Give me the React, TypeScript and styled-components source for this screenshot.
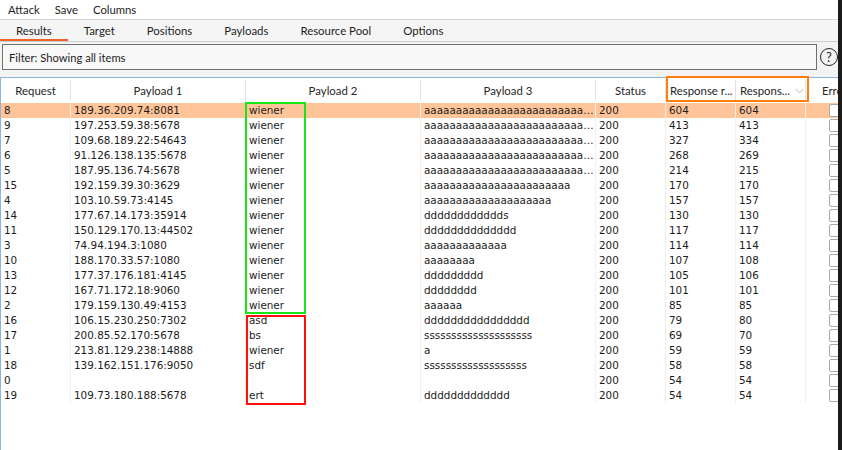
import React from 'react';
import styled, { createGlobalStyle } from 'styled-components';

const Global = createGlobalStyle`
  html, body { margin: 0; padding: 0; background: #fff; }
  body { font-family: Lato, "Noto Sans", sans-serif; -webkit-font-smoothing: antialiased; }
  * { box-sizing: border-box; }
`;

const COLS = '70px 175px 175px 175px 70px 70px 70px 1fr';

const Window = styled.div`
  width: 842px;
  height: 450px;
  display: flex;
  overflow: hidden;
  background: #fff;
`;

const Main = styled.div`
  flex: 1;
  min-width: 0;
  display: flex;
  flex-direction: column;
  position: relative;
`;

const EdgeStrip = styled.div`
  width: 4px;
  background: #1c1c1c;
`;

const MenuBar = styled.div`
  height: 19px;
  display: flex;
  align-items: center;
  padding: 0 0 1px 8px;
  gap: 15px;
  font-size: 11.3px;
  color: #1e1e1e;
  background: #fff;
`;

const TabBar = styled.div`
  height: 23px;
  display: flex;
  background: #f5f5f5;
  border-top: 1px solid #d9d9d9;
  border-bottom: 1px solid #cdcdcd;
`;

const Tab = styled.div<{ $active?: boolean }>`
  padding: 0 16px 1px;
  display: flex;
  align-items: center;
  font-size: 11.4px;
  color: #1e1e1e;
  box-shadow: ${(p) => (p.$active ? 'inset 0 -2px 0 #f0622a' : 'none')};
`;

const FilterArea = styled.div`
  display: flex;
  align-items: center;
  gap: 3px;
  padding: 2px 0 7px 2px;
  background: #f3f3f3;
`;

const FilterBox = styled.div`
  flex: 1;
  height: 26px;
  display: flex;
  align-items: center;
  padding-left: 6px;
  border: 1px solid #707070;
  background: #f8f8f8;
  font-size: 11.2px;
  color: #1e1e1e;
`;

const HelpIcon = styled.div`
  width: 18px;
  height: 18px;
  border: 1.5px solid #262626;
  border-radius: 50%;
  display: flex;
  align-items: center;
  justify-content: center;
  font-size: 13px;
  color: #262626;
`;

const Table = styled.div`
  flex: 1;
  border-top: 1px solid #8db4de;
  border-left: 1px solid #8db4de;
  background: #fff;
`;

const HeaderRow = styled.div`
  display: grid;
  grid-template-columns: ${COLS};
  height: 25px;
  font-size: 11.4px;
  color: #262626;
`;

const HeaderCell = styled.div<{ $align?: 'center' | 'left' }>`
  display: flex;
  align-items: center;
  justify-content: ${(p) => (p.$align === 'left' ? 'flex-start' : 'center')};
  padding-left: ${(p) => (p.$align === 'left' ? '4px' : '0')};
  margin: 2px 0 2px;
  border-right: 1px solid #e2e2e2;
  white-space: nowrap;
  overflow: hidden;
  gap: 5px;
`;

const ErrorHeader = styled(HeaderCell)`
  padding-left: 16px;
  border-right: none;
`;

const Row = styled.div<{ $selected?: boolean }>`
  display: grid;
  grid-template-columns: ${COLS};
  height: 15px;
  background: ${(p) => (p.$selected ? '#ffc599' : '#fff')};
  font-family: "DejaVu Sans", Verdana, sans-serif;
  font-size: 10.4px;
  color: #1c1c1c;
`;

const Cell = styled.div`
  padding-left: 3px;
  line-height: 15px;
  border-right: 1px solid #f0f0f0;
  white-space: nowrap;
  overflow: hidden;
  text-overflow: ellipsis;
`;

const CheckCell = styled.div`
  display: flex;
  align-items: center;
  padding-left: 23px;
  overflow: hidden;
`;

const CheckBox = styled.span`
  display: block;
  flex: none;
  width: 14px;
  height: 13px;
  border: 1px solid #a9a9a9;
  border-radius: 2px;
  background: #fff;
`;

const Annotation = styled.div<{ $color: string }>`
  position: absolute;
  border: 2px solid ${(p) => p.$color};
  pointer-events: none;
`;

const SortArrow = () => (
  <svg width="9" height="6" viewBox="0 0 9 6">
    <path d="M0.5 0.8 L4.5 4.8 L8.5 0.8" fill="none" stroke="#b8b8b8" strokeWidth="1" />
  </svg>
);

const LONG = 'a'.repeat(40);
const rep = (c: string, n: number) => c.repeat(n);

type R = [string, string, string, string, string, string, string];
const rows: R[] = [
  ['8', '189.36.209.74:8081', 'wiener', LONG, '200', '604', '604'],
  ['9', '197.253.59.38:5678', 'wiener', LONG, '200', '413', '413'],
  ['7', '109.68.189.22:54643', 'wiener', LONG, '200', '327', '334'],
  ['6', '91.126.138.135:5678', 'wiener', LONG, '200', '268', '269'],
  ['5', '187.95.136.74:5678', 'wiener', LONG, '200', '214', '215'],
  ['15', '192.159.39.30:3629', 'wiener', rep('a', 23), '200', '170', '170'],
  ['4', '103.10.59.73:4145', 'wiener', rep('a', 20), '200', '157', '157'],
  ['14', '177.67.14.173:35914', 'wiener', rep('d', 12) + 's', '200', '130', '130'],
  ['11', '150.129.170.13:44502', 'wiener', rep('d', 14), '200', '117', '117'],
  ['3', '74.94.194.3:1080', 'wiener', rep('a', 13), '200', '114', '114'],
  ['10', '188.170.33.57:1080', 'wiener', rep('a', 8), '200', '107', '108'],
  ['13', '177.37.176.181:4145', 'wiener', rep('d', 9), '200', '105', '106'],
  ['12', '167.71.172.18:9060', 'wiener', rep('d', 8), '200', '101', '101'],
  ['2', '179.159.130.49:4153', 'wiener', rep('a', 6), '200', '85', '85'],
  ['16', '106.15.230.250:7302', 'asd', rep('d', 16), '200', '79', '80'],
  ['17', '200.85.52.170:5678', 'bs', rep('s', 20), '200', '69', '70'],
  ['1', '213.81.129.238:14888', 'wiener', 'a', '200', '59', '59'],
  ['18', '139.162.151.176:9050', 'sdf', rep('s', 19), '200', '58', '58'],
  ['0', '', '', '', '200', '54', '54'],
  ['19', '109.73.180.188:5678', 'ert', rep('d', 13), '200', '54', '54'],
];

export default function App() {
  return (
    <Window>
      <Global />
      <Main>
        <MenuBar>
          <span>Attack</span>
          <span>Save</span>
          <span>Columns</span>
        </MenuBar>
        <TabBar>
          <Tab $active>Results</Tab>
          <Tab>Target</Tab>
          <Tab>Positions</Tab>
          <Tab>Payloads</Tab>
          <Tab>Resource Pool</Tab>
          <Tab>Options</Tab>
        </TabBar>
        <FilterArea>
          <FilterBox>Filter: Showing all items</FilterBox>
          <HelpIcon>?</HelpIcon>
        </FilterArea>
        <Table>
          <HeaderRow>
            <HeaderCell>Request</HeaderCell>
            <HeaderCell>Payload 1</HeaderCell>
            <HeaderCell>Payload 2</HeaderCell>
            <HeaderCell>Payload 3</HeaderCell>
            <HeaderCell>Status</HeaderCell>
            <HeaderCell $align="left">Response r...</HeaderCell>
            <HeaderCell $align="left">
              Respons...
              <SortArrow />
            </HeaderCell>
            <ErrorHeader $align="left">Error</ErrorHeader>
          </HeaderRow>
          {rows.map((r, i) => (
            <Row key={i} $selected={i === 0}>
              {r.map((c, j) => (
                <Cell key={j}>{c}</Cell>
              ))}
              <CheckCell>
                <CheckBox />
              </CheckCell>
            </Row>
          ))}
        </Table>
        <Annotation $color="#19e619" style={{ left: 245, top: 102, width: 61, height: 212 }} />
        <Annotation $color="#ff1010" style={{ left: 246, top: 315, width: 60, height: 90 }} />
        <Annotation $color="#ff7f0a" style={{ left: 666, top: 76, width: 143, height: 26 }} />
      </Main>
      <EdgeStrip />
    </Window>
  );
}
